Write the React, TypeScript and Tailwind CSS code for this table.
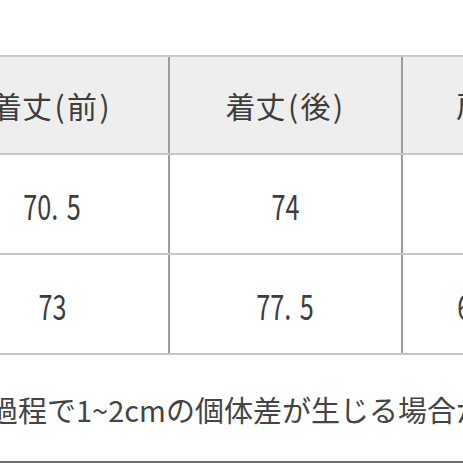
import React from "react";

const jp = { fontFamily: '"Noto Sans CJK JP", "Noto Sans", sans-serif' };

function Num({ v }: { v: string }) {
  const parts = v.split(".");
  return (
    <span className="inline-block scale-x-[0.72] text-[35px] leading-none" style={jp}>
      {parts[0]}
      {parts.length > 1 ? (
        <>
          .<span className="ml-[12px]">{parts[1]}</span>
        </>
      ) : null}
    </span>
  );
}

function Head({ a, b }: { a: string; b?: string }) {
  return (
    <span className="inline-flex items-center text-[30px] leading-none" style={jp}>
      {a}
      {b ? (
        <>
          <span className="inline-block w-[15px] text-center">(</span>
          {b}
          <span className="inline-block w-[15px] text-center">)</span>
        </>
      ) : null}
    </span>
  );
}

const cols = "grid grid-cols-[232px_233px_168px]";
const cell = "flex items-center justify-center";
const vline = "border-l-2 border-[#9c9c9c]";

export default function App() {
  const rows = [
    ["70.5", "74", "58"],
    ["73", "77.5", "60.5"],
  ];
  return (
    <div className="w-[463px] h-[463px] overflow-hidden bg-white text-[#3d3d3d]">
      <div className="pt-[55px] w-[463px]">
        <div className="ml-[-64px] w-[640px] border-t-2 border-[#c9c9c9]">
          <div className={`${cols} h-[98px] bg-[#eeeeee] border-b-2 border-[#c6c6c6]`}>
            <div className={cell}>
              <Head a="着丈" b="前" />
            </div>
            <div className={`${cell} ${vline}`}>
              <Head a="着丈" b="後" />
            </div>
            <div className={`${cell} ${vline}`}>
              <Head a="肩幅" />
            </div>
          </div>
          {rows.map((r, i) => (
            <div key={i} className={`${cols} h-[100px] border-b-2 border-[#c6c6c6]`}>
              <div className={cell}>
                <Num v={r[0]} />
              </div>
              <div className={`${cell} ${vline}`}>
                <Num v={r[1]} />
              </div>
              <div className={`${cell} ${vline}`}>
                <Num v={r[2]} />
              </div>
            </div>
          ))}
        </div>
        <div
          className="mt-[39px] ml-[-11px] whitespace-nowrap text-[29px] leading-[30px] text-[#444]"
          style={jp}
        >
          過程で1~2cmの個体差が生じる場合がございます。
        </div>
        <div className="mt-[37px] h-[2px] w-full bg-[#6b6b6b]" />
      </div>
    </div>
  );
}
